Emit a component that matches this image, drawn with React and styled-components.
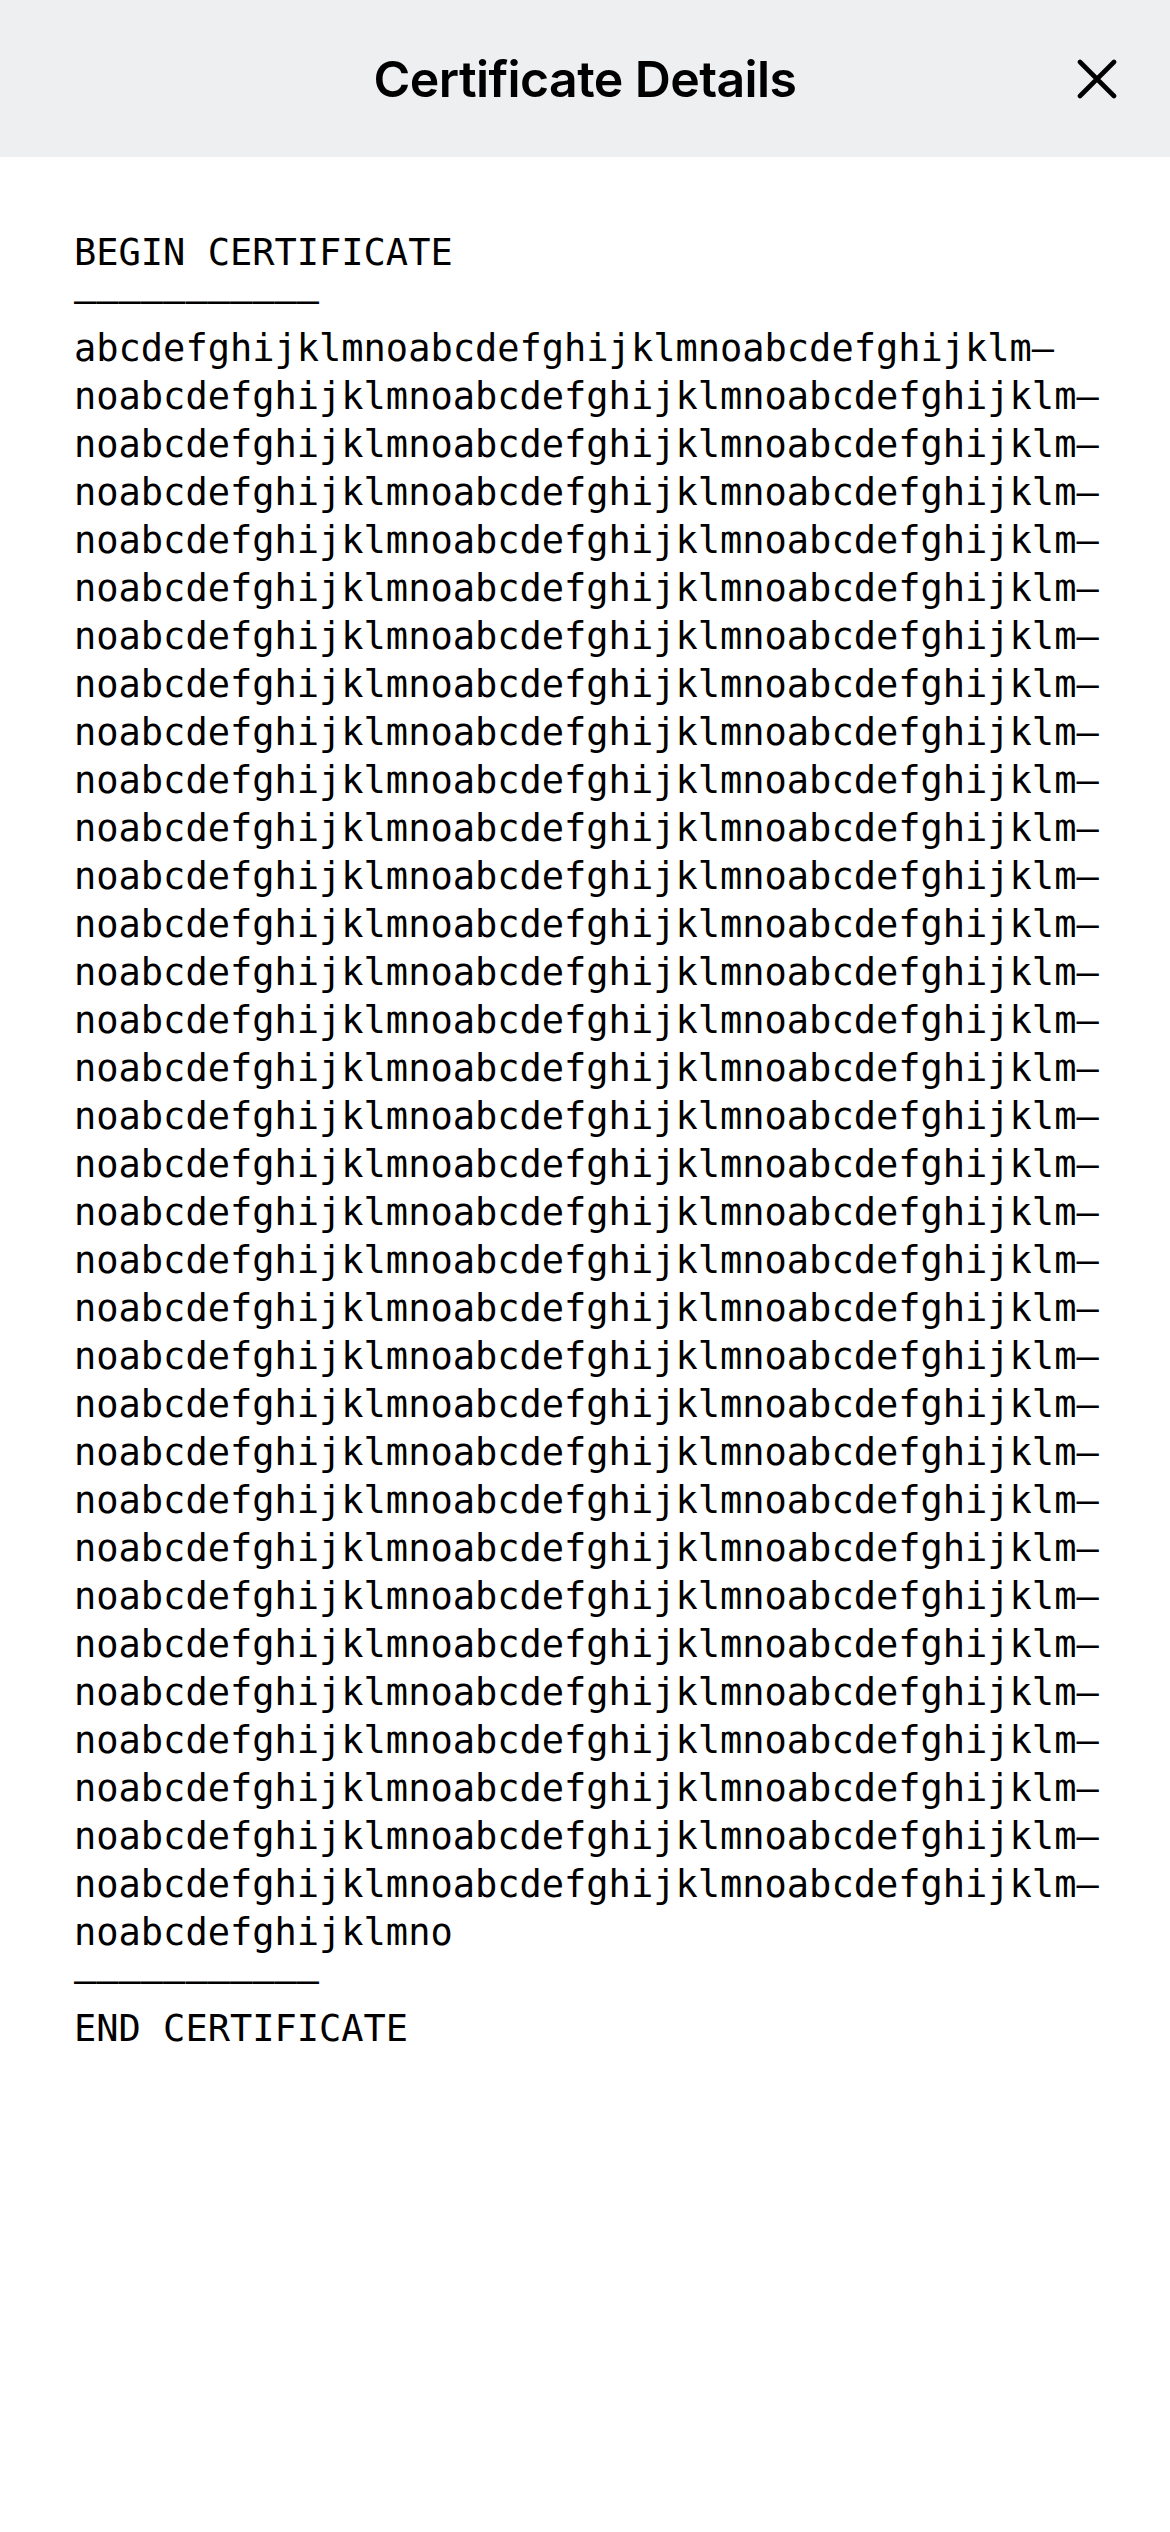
import React from 'react';
import styled, { createGlobalStyle } from 'styled-components';

const GlobalStyle = createGlobalStyle`
  html, body {
    margin: 0;
    padding: 0;
    background: #ffffff;
  }
  * {
    box-sizing: border-box;
  }
`;

const Screen = styled.div`
  width: 1170px;
  min-height: 2532px;
  background: #ffffff;
  display: flex;
  flex-direction: column;
`;

const Header = styled.header`
  height: 157px;
  background: #eeeff1;
  display: grid;
  grid-template-columns: 1fr auto 1fr;
  align-items: center;
  padding: 0 53px 0 53px;
`;

const Title = styled.h1`
  grid-column: 2;
  margin: 0;
  font-family: Inter, "Liberation Sans", sans-serif;
  font-size: 50px;
  font-weight: 600;
  letter-spacing: -0.6px;
  color: #000000;
`;

const CloseButton = styled.button`
  grid-column: 3;
  justify-self: end;
  width: 40px;
  height: 40px;
  padding: 0;
  border: none;
  background: transparent;
  display: flex;
  align-items: center;
  justify-content: center;

  svg {
    width: 40px;
    height: 40px;
  }
`;

const Body = styled.main`
  padding: 72px 74px 0 74px;
`;

const CertText = styled.pre`
  margin: 0;
  font-family: "DejaVu Sans Mono", "Liberation Mono", monospace;
  font-size: 37px;
  line-height: 48px;
  color: #000000;
  white-space: pre;
`;

const chunk = 'abcdefghijklmno';

const buildLines = () => {
  const lines = ['BEGIN CERTIFICATE', '–––––––––––', 'abcdefghijklmnoabcdefghijklmnoabcdefghijklm–'];
  for (let i = 0; i < 32; i++) {
    lines.push('no' + chunk + chunk + 'abcdefghijklm–');
  }
  lines.push('noabcdefghijklmno');
  lines.push('–––––––––––');
  lines.push('END CERTIFICATE');
  return lines;
};

const App = () => {
  const lines = buildLines();

  return (
    <>
      <GlobalStyle />
      <Screen>
        <Header>
          <Title>Certificate Details</Title>
          <CloseButton aria-label="Close">
            <svg viewBox="0 0 40 40" fill="none" stroke="#000" strokeWidth="4.6" strokeLinecap="round">
              <path d="M3 3 L37 37 M37 3 L3 37" />
            </svg>
          </CloseButton>
        </Header>
        <Body>
          <CertText>{lines.join('\n')}</CertText>
        </Body>
      </Screen>
    </>
  );
};

export default App;
